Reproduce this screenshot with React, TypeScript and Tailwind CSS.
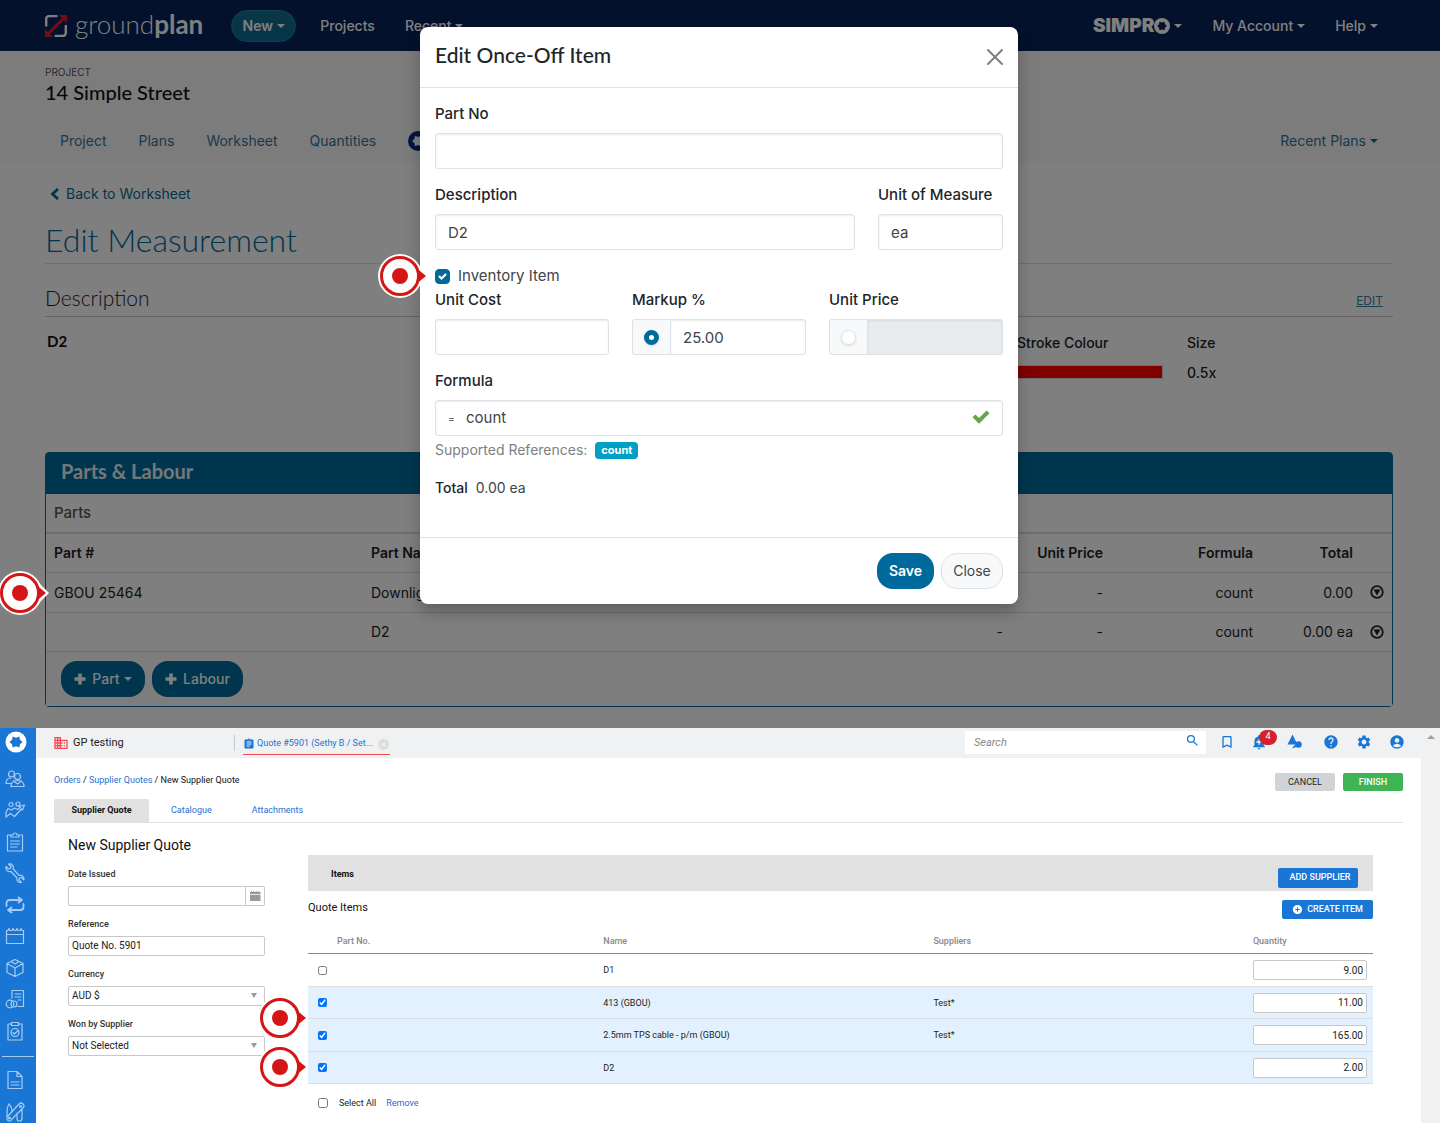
import { ReactNode, useState } from "react";
import {
    MdAccountCircle,
    MdAddAlert,
    MdAddCircle,
    MdAssignment,
    MdBookmarkBorder,
    MdBusiness,
    MdCancel,
    MdHelp,
    MdSearch,
    MdSettings,
} from "react-icons/md";

const parts = [
    { no: "GBOU 25464", name: "Downlight", cost: "-", price: "-", formula: "count", total: "0.00" },
    { no: "", name: "D2", cost: "-", price: "-", formula: "count", total: "0.00 ea" },
];

const quoteItems = [
    { name: "D1", supplier: "", quantity: "9.00", checked: false },
    { name: "413 (GBOU)", supplier: "Test*", quantity: "11.00", checked: true },
    { name: "2.5mm TPS cable - p/m (GBOU)", supplier: "Test*", quantity: "165.00", checked: true },
    { name: "D2", supplier: "", quantity: "2.00", checked: true },
];

const inputClass =
    "h-9 w-full rounded-[3px] border border-[#dee2e6] bg-white px-3 text-[15px] text-[#3f4448] shadow-[inset_0_1px_2px_rgba(0,0,0,0.08)] outline-none";
const labelClass = "mb-2 block text-[15px] leading-[22px] font-medium text-[#212529]";
const radioClass =
    "size-[15px] appearance-none rounded-full border border-[#e2e4e6] bg-white shadow-[0_1px_3px_rgba(0,0,0,0.12)] checked:border-[5px] checked:border-[#006a9c]";
const smallInputClass = "block h-5 w-full rounded-[2px] border border-[#c8c8c8] bg-white px-[3px] text-[10px] text-[#222] outline-none";

function Caret({ className = "" }: { className?: string }) {
    return (
        <svg viewBox="0 0 8 4" className={`h-1 w-2 ${className}`} fill="currentColor" aria-hidden="true">
            <path d="M0 0h8L4 4z" />
        </svg>
    );
}

function Plus() {
    return (
        <svg viewBox="0 0 12 12" className="size-3" fill="currentColor" aria-hidden="true">
            <path d="M4.200.5h3.600v3.700h3.700v3.600H7.800v3.700H4.200V7.800H.5V4.200h3.700z" />
        </svg>
    );
}

function Check({ className }: { className: string }) {
    return (
        <svg viewBox="0 0 18 16" className={className} fill="currentColor" aria-hidden="true">
            <path d="M.5 8.300 3.400 5.400 7 8.900 14.600 1.400 17.500 4.300 7 14.800z" />
        </svg>
    );
}

function Pin({ className }: { className: string }) {
    return (
        <svg viewBox="0 0 52 44" className={`pointer-events-none absolute z-20 h-11 w-[52px] ${className}`} aria-hidden="true">
            <circle cx="22" cy="22" r="22" fill="#fff" />
            <path d="M38 9 L51 22 L38 35z" fill="#fff" />
            <path d="M39 14.5 L48 22 L39 29.5z" fill="#d41616" />
            <circle cx="22" cy="22" r="18.5" fill="#fff" stroke="#d41616" strokeWidth="3" />
            <circle cx="22" cy="22" r="8" fill="#d41616" />
        </svg>
    );
}

function SideIcon({ label, children }: { label: string; children: ReactNode }) {
    return (
        <a href="#" aria-label={label} className="block">
            <svg viewBox="0 0 20 20" className="size-5" fill="none" stroke="#a9cbf0" strokeWidth="1.2" strokeLinejoin="round" strokeLinecap="round">
                {children}
            </svg>
        </a>
    );
}

function NavBar() {
    return (
        <nav className="flex h-[51px] items-center bg-[#062258] pr-[62px] pl-[45px] text-[14px] font-medium text-white">
            <a href="#" className="flex items-center gap-2">
                <svg viewBox="0 0 22 22" className="size-[22px]" fill="none" aria-hidden="true">
                    <path d="M1.200 11.500V4a3 3 0 0 1 3-3H12.500M20.800 10V18a3 3 0 0 1-3 3H9.500" stroke="#fff" strokeWidth="2.400" />
                    <path d="M3 19 19 3" stroke="#e01f26" strokeWidth="2.800" />
                    <path d="M14 0h8v8zM0 14v8h8z" fill="#e01f26" />
                </svg>
                <span className="pb-1 font-['Lato',sans-serif] text-[26px] leading-8 font-light">
                    ground<span className="font-bold">plan</span>
                </span>
            </a>
            <button type="button" className="ml-7 flex h-8 w-[65px] items-center justify-center gap-1 rounded-full border border-[#0c86a8] bg-gradient-to-b from-[#146f8c] to-[#0d6a92] font-semibold">
                New <Caret />
            </button>
            <a href="#" className="ml-6">Projects</a>
            <a href="#" className="ml-[30px] flex items-center gap-1">
                Recent <Caret />
            </a>
            <button type="button" className="ml-auto flex items-center gap-1">
                <span className="flex items-center text-[19px] leading-6 font-black">
                    SIMPR
                    <svg viewBox="0 0 16 16" className="size-4" aria-label="O">
                        <circle cx="8" cy="8" r="8" fill="#fff" />
                        <path d="M12.800 8 11.100 9.800 10.400 12.200 8 11.600 5.600 12.200 4.900 9.800 3.200 8 4.900 6.200 5.600 3.800 8 4.400 10.400 3.800 11.100 6.200z" fill="#062258" />
                    </svg>
                </span>
                <Caret />
            </button>
            <button type="button" className="ml-[30px] flex items-center gap-1">
                My Account <Caret />
            </button>
            <button type="button" className="ml-[30px] flex items-center gap-1">
                Help <Caret />
            </button>
        </nav>
    );
}

function ProjectHeader() {
    return (
        <header className="h-[111px] bg-[#f9f9f9] pt-3.5 pr-[62px] pl-[45px]">
            <p className="text-[10px] leading-[14px] text-[#555]">PROJECT</p>
            <h2 className="font-['Lato',sans-serif] text-[20px] leading-[26px] font-medium text-[#111]">14 Simple Street</h2>
            <div className="mt-[25px] flex items-center gap-8 pl-[15px] text-[14px] leading-[22px] text-[#337299]">
                <a href="#">Project</a>
                <a href="#">Plans</a>
                <a href="#">Worksheet</a>
                <a href="#">Quantities</a>
                <a href="#" aria-label="Simpro">
                    <svg viewBox="0 0 20 20" className="size-5">
                        <circle cx="10" cy="10" r="10" fill="#052a78" />
                        <path d="M16 10 13.600 12 13 15.200 10 14 7 15.200 6.400 12 4 10 6.400 8 7 4.800 10 6 13 4.800 13.600 8z" fill="#fff" />
                    </svg>
                </a>
                <button type="button" className="ml-auto flex items-center gap-1">
                    Recent Plans <Caret className="text-[#006a9c]" />
                </button>
            </div>
        </header>
    );
}

function Measurement() {
    return (
        <main className="pt-[21px] pr-[47px] pb-[21px] pl-[45px] text-[14px]">
            <a href="#" className="flex items-center gap-1.5 pl-[5px] leading-[22px] text-[#0b6795]">
                <svg viewBox="0 0 10 12" className="h-3 w-2.5" fill="none" stroke="#006a9c" strokeWidth="2.800" aria-hidden="true">
                    <path d="M8 1 2.500 6 8 11" />
                </svg>
                Back to Worksheet
            </a>
            <h1 className="mt-3 border-b border-[#dcdfe1] pt-0.5 pb-0.5 font-['Lato',sans-serif] text-[32px] leading-[42px] font-light text-[#006a9c]">
                Edit Measurement
            </h1>
            <div className="mt-5 flex items-center justify-between border-b border-[#ccc] pr-2.5 pb-1 text-[#222]">
                <h3 className="font-['Lato',sans-serif] text-[21px] leading-7 font-light">Description</h3>
                <a href="#" className="pt-1.5 text-[12px] text-[#3a7da2] underline">EDIT</a>
            </div>
            <div className="mt-3 flex h-[123px] leading-6">
                <p className="ml-0.5 font-['Lato',sans-serif] text-[15px] font-bold text-[#111]">D2</p>
                <dl className="mt-0.5 ml-auto grid grid-cols-[146px_206px] grid-rows-[24px_36px] gap-x-6 font-medium text-[#222]">
                    <dt>Stroke Colour</dt>
                    <dt>Size</dt>
                    <dd className="mt-2.5 h-3.5 border border-[#ddd] bg-[#ff0000]" />
                    <dd className="pt-1.5">0.5x</dd>
                </dl>
            </div>

            <section className="rounded border border-[#006a9c] text-[#222]">
                <h2 className="h-[41px] bg-[#006a9c] px-[15px] font-['Lato',sans-serif] text-[20px] leading-[37px] font-bold text-white/90">
                    Parts &amp; Labour
                </h2>
                <h3 className="border-b-2 border-[#ddd] px-2 text-[15px] leading-[38px] font-medium text-[#555]">Parts</h3>
                <table className="w-full table-fixed text-right">
                    <colgroup>
                        <col className="w-[317px]" />
                        <col />
                        <col className="w-40" />
                        <col className="w-[100px]" />
                        <col className="w-[150px]" />
                        <col className="w-[100px]" />
                        <col className="w-[31px]" />
                    </colgroup>
                    <thead>
                        <tr className="h-[38px] border-b border-[#d8dadc] [&>th]:px-2 [&>th]:font-semibold">
                            <th className="text-left">Part #</th>
                            <th className="text-left">Part Name</th>
                            <th>Unit Cost</th>
                            <th>Unit Price</th>
                            <th>Formula</th>
                            <th>Total</th>
                            <th />
                        </tr>
                    </thead>
                    <tbody>
                        {parts.map((part) => (
                            <tr key={part.name} className="border-b border-[#d8dadc] odd:h-10 even:h-[39px] [&>td]:px-2">
                                <td className="relative text-left">
                                    {part.no && <Pin className="-top-0.5 -left-12" />}
                                    {part.no}
                                </td>
                                <td className="text-left">{part.name}</td>
                                <td>{part.cost}</td>
                                <td>{part.price}</td>
                                <td>{part.formula}</td>
                                <td>{part.total}</td>
                                <td className="!px-0">
                                    <button type="button" aria-label="Row actions" className="mx-auto block">
                                        <svg viewBox="0 0 14 14" className="size-[14px]">
                                            <circle cx="7" cy="7" r="5.800" fill="none" stroke="#222" strokeWidth="1.800" />
                                            <path d="M3.500 4.600h7L7 10.500z" fill="#222" />
                                        </svg>
                                    </button>
                                </td>
                            </tr>
                        ))}
                    </tbody>
                </table>
                <div className="flex gap-[7px] bg-[#fafafa] px-[15px] py-[9px] font-medium text-white">
                    <button type="button" className="flex h-9 w-[84px] items-center justify-center gap-1.5 rounded-2xl bg-[#006a9c]">
                        <Plus />
                        Part <Caret className="-ml-0.5" />
                    </button>
                    <button type="button" className="flex h-9 w-[91px] items-center justify-center gap-1.5 rounded-2xl bg-[#006a9c]">
                        <Plus />
                        Labour
                    </button>
                </div>
            </section>
        </main>
    );
}

function EditItemDialog() {
    const [mode, setMode] = useState("markup");

    return (
        <div className="absolute inset-0 z-10 flex items-start justify-center bg-black/50 pt-[27px] pr-0.5">
            <div role="dialog" aria-labelledby="dialog-title" className="w-[598px] rounded-lg bg-white text-[15px] text-[#3f4448] shadow-[0_8px_16px_rgba(0,0,0,0.25)]">
                <div className="flex h-[61px] items-center justify-between border-b border-[#dee2e6] px-[15px]">
                    <h2 id="dialog-title" className="pb-1 font-['Lato',sans-serif] text-[21px] leading-7 font-medium text-[#212529]">
                        Edit Once-Off Item
                    </h2>
                    <button type="button" aria-label="Close dialog">
                        <svg viewBox="0 0 16 16" className="size-4" stroke="#7c7c7c" strokeWidth="1.800" strokeLinecap="round">
                            <path d="M1 1l14 14M15 1L1 15" />
                        </svg>
                    </button>
                </div>
                <form className="px-[15px] pt-[15px] pb-[38px]">
                    <label htmlFor="part-no" className={labelClass}>Part No</label>
                    <input id="part-no" className={inputClass} />
                    <div className="mt-[15px] grid grid-cols-[1fr_125px] gap-[23px]">
                        <div>
                            <label htmlFor="description" className={labelClass}>Description</label>
                            <input id="description" defaultValue="D2" className={inputClass} />
                        </div>
                        <div>
                            <label htmlFor="uom" className={`${labelClass} whitespace-nowrap`}>Unit of Measure</label>
                            <input id="uom" defaultValue="ea" className={inputClass} />
                        </div>
                    </div>
                    <div className="relative mt-[15px] flex h-[22px] items-center gap-2">
                        <Pin className="-top-[11px] -left-[57px]" />
                        <span className="grid place-items-center">
                            <input
                                id="inventory"
                                type="checkbox"
                                defaultChecked
                                className="peer col-start-1 row-start-1 size-[15px] appearance-none rounded-[4px] border border-[#006a9c] checked:bg-[#006a9c]"
                            />
                            <Check className="pointer-events-none col-start-1 row-start-1 hidden size-[9px] text-white peer-checked:block" />
                        </span>
                        <label htmlFor="inventory">Inventory Item</label>
                    </div>
                    <div className="mt-0.5 grid grid-cols-3 gap-[23px]">
                        <div>
                            <label htmlFor="unit-cost" className={labelClass}>Unit Cost</label>
                            <input id="unit-cost" className={inputClass} />
                        </div>
                        <div>
                            <label htmlFor="markup" className={labelClass}>Markup %</label>
                            <div className="flex">
                                <span className="flex w-[38px] shrink-0 items-center justify-center rounded-l-[3px] border border-r-0 border-[#dee2e6] bg-[#f8f9fa]">
                                    <input
                                        type="radio"
                                        name="mode"
                                        aria-label="Use markup"
                                        checked={mode === "markup"}
                                        onChange={() => setMode("markup")}
                                        className={radioClass}
                                    />
                                </span>
                                <input id="markup" defaultValue="25.00" disabled={mode !== "markup"} className={`${inputClass} rounded-l-none disabled:bg-[#e9ecef]`} />
                            </div>
                        </div>
                        <div>
                            <label htmlFor="unit-price" className={labelClass}>Unit Price</label>
                            <div className="flex">
                                <span className="flex w-[38px] shrink-0 items-center justify-center rounded-l-[3px] border border-r-0 border-[#dee2e6] bg-[#f8f9fa]">
                                    <input
                                        type="radio"
                                        name="mode"
                                        aria-label="Use unit price"
                                        checked={mode === "price"}
                                        onChange={() => setMode("price")}
                                        className={radioClass}
                                    />
                                </span>
                                <input id="unit-price" disabled={mode !== "price"} className={`${inputClass} rounded-l-none disabled:bg-[#e9ecef]`} />
                            </div>
                        </div>
                    </div>
                    <label htmlFor="formula" className={`${labelClass} mt-[15px]`}>Formula</label>
                    <div className={`${inputClass} flex items-center`}>
                        <span className="w-[18px] text-[10px]">=</span>
                        <input id="formula" defaultValue="count" className="min-w-0 flex-1 outline-none" />
                        <Check className="mb-0.5 h-4 w-[18px] text-[#67a546]" />
                    </div>
                    <p className="mt-[3px] flex items-center gap-2 text-[14px] leading-[22px] text-[#7b7f83]">
                        Supported References:
                        <span className="rounded bg-[#009fc5] px-1.5 text-[11px] leading-[17px] font-bold text-white">count</span>
                    </p>
                    <p className="mt-4 text-[14px] leading-[22px]">
                        <span className="mr-2 font-medium text-[#212529]">Total</span>0.00 ea
                    </p>
                </form>
                <div className="flex justify-end gap-[7px] border-t border-[#dee2e6] p-[15px] text-[14px]">
                    <button type="button" className="h-9 w-[57px] rounded-2xl bg-[#006a9c] pb-0.5 font-semibold text-white">Save</button>
                    <button type="button" className="h-9 w-[62px] rounded-2xl border border-[#dee2e6] bg-[#f8f9fa] pb-0.5">Close</button>
                </div>
            </div>
        </div>
    );
}

function Sidebar() {
    return (
        <aside className="w-9 shrink-0 bg-[#1976d5] pt-[3px] pb-px">
            <a href="#" aria-label="Home" className="ml-[5px] block">
                <svg viewBox="0 0 22 22" className="size-[22px]">
                    <circle cx="11" cy="11" r="10.500" fill="#fff" />
                    <path d="M17.500 11 15 13.300 14.300 16.600 11 15.300 7.700 16.600 7 13.300 4.500 11 7 8.700 7.700 5.400 11 6.700 14.300 5.400 15 8.700z" fill="#1976d5" />
                </svg>
            </a>
            <div className="mt-4 ml-[5px] flex h-[272px] flex-col justify-between">
                <SideIcon label="People">
                    <circle cx="6.500" cy="5" r="3" />
                    <circle cx="12.500" cy="7.500" r="3" fill="#1976d5" />
                    <path d="M1 14.500c0-3.500 2-5.500 5-5.500M1 14.500h5M6 17.500c0-4 2.500-6 6.500-6s6.500 2 6.500 6zM8.500 12l4 3 4-3" />
                </SideIcon>
                <SideIcon label="Leads">
                    <circle cx="6" cy="4.500" r="2" />
                    <circle cx="13" cy="4" r="2" />
                    <path d="M1 17v-4.500l2-4 3.500 1.500 3-2 3 1.500 3-2L14 6.500 19.500 5l-2 5-1-1L9.500 16.500 5.500 13.500z" />
                </SideIcon>
                <SideIcon label="Quotes">
                    <path d="M6 3H2.500v16h15V3H14M6 5V3h2a2 2 0 0 1 4 0h2v2zM5.500 9h9M5.500 12h9M5.500 15H12" />
                </SideIcon>
                <SideIcon label="Jobs">
                    <path d="M1 3.500 3.500 6l2-.5.500-2L3.500 1C7 .3 9 3 8.200 6l6 6.500c3-.8 5.300 1.500 4.600 4.500L16.500 14.500l-2 .5-.5 2 2.500 2.500c-3 .5-5-1.500-4.500-4.500L6 8.500C3 9.300.300 7 1 3.500z" />
                </SideIcon>
                <SideIcon label="Recurring">
                    <path d="M1.500 11V8a3 3 0 0 1 3-3H15M13.500 2.500l3.500 2.500-3.500 2.500M18.500 9v3a3 3 0 0 1-3 3H5M6.500 12.500 3 15l3.500 2.500" strokeWidth="1.800" />
                </SideIcon>
                <SideIcon label="Schedules">
                    <path d="M1.500 4.500h1.500l1-2 1 2h2l1-2 1 2h2l1-2 1 2h2l1-2 1 2h1.500V17.500h-17zM1.500 8.500h17" />
                </SideIcon>
                <SideIcon label="Materials">
                    <path d="M10 1.500l8 4v9L10 18.500l-8-4v-9zM2 5.500l8 4.500 8-4.500M10 10v8.500M6 3.500l4 2.500 4-2.500" />
                </SideIcon>
                <SideIcon label="Invoices">
                    <path d="M7 9V1.500h11.500v16H13M10 5h6M10 8h6M13 11h3" />
                    <circle cx="5" cy="15" r="3.800" />
                    <circle cx="9" cy="15" r="3" />
                </SideIcon>
                <SideIcon label="Tasks">
                    <path d="M6.500 3H3v16h14V3h-3.500M6.500 4.500v-3h7v3zM8 11.500l1.500 1.500 3-3" />
                    <circle cx="10" cy="11.500" r="4" />
                </SideIcon>
            </div>
            <hr className="mx-0.5 mt-[15px] border-[#a9cbf0]" />
            <div className="mt-[13px] ml-[5px] flex flex-col gap-3">
                <SideIcon label="Reports">
                    <path d="M3 1.500h9l5 5v12H3zM12 1.500v5h5M6 12h8M6 15h8" />
                </SideIcon>
                <SideIcon label="Utilities">
                    <path d="M4 2c-2 3-2 6-2 9v5a2.500 2.500 0 0 0 5 1L18 6a2.800 2.800 0 0 0-4-4L3 14M4 2c2 2 3 4 3 7M12 11v5.500a2.500 2.500 0 0 0 5 0V7" />
                    <circle cx="15.500" cy="4.500" r="1" />
                    <circle cx="4.500" cy="16" r="1" />
                </SideIcon>
            </div>
        </aside>
    );
}

function TopBar() {
    return (
        <div className="flex h-[30px] items-center bg-[#eff1f3] pl-[17px] text-[#1976d5]">
            <MdBusiness className="size-4 text-[#fb4a4f]" />
            <span className="ml-1 w-[161px] pt-0.5 text-[11px] text-[#222]">GP testing</span>
            <div className="flex h-4 items-center border-l border-[#c5c9cc] pl-2">
                <a href="#" className="flex h-6 items-center gap-0.5 border-b border-[#fb4a4f] pt-1 text-[9px] whitespace-nowrap">
                    <MdAssignment className="size-3" />
                    Quote #5901 (Sethy B / Set...
                    <MdCancel className="ml-0.5 size-[13px] text-[#dcdcdc]" />
                </a>
            </div>
            <label className="ml-auto flex h-[23px] w-[241px] items-center bg-white pr-1.5 pl-[9px]">
                <input type="search" placeholder="Search" aria-label="Search" className="min-w-0 flex-1 pt-px text-[11px] italic outline-none placeholder:text-[#888]" />
                <MdSearch className="mb-1 size-[15px]" />
            </label>
            <div className="flex w-[215px] shrink-0 items-center pb-0.5 pl-[13px]">
                <a href="#" aria-label="Bookmarks"><MdBookmarkBorder className="size-4" /></a>
                <a href="#" aria-label="Notifications" className="relative ml-4">
                    <MdAddAlert className="size-4" />
                    <span className="absolute -top-1 left-2 flex h-[15px] w-[18px] items-center justify-center rounded-full bg-[#d3222a] text-[9px] text-white">4</span>
                </a>
                <a href="#" aria-label="Announcements" className="ml-5">
                    <svg viewBox="0 0 15 15" className="size-[15px]" fill="currentColor">
                        <path d="M5.500.5 10.500 10.500H.5zM5 14.500l3-4 1.500 2.500z" />
                        <circle cx="11.500" cy="10.500" r="3.200" />
                    </svg>
                </a>
                <a href="#" aria-label="Help" className="ml-[21px]"><MdHelp className="size-4" /></a>
                <a href="#" aria-label="Settings" className="ml-[17px]"><MdSettings className="size-4" /></a>
                <a href="#" aria-label="Account" className="ml-[17px]"><MdAccountCircle className="size-4" /></a>
            </div>
        </div>
    );
}

function SmallField({ id, label, children }: { id: string; label: string; children: ReactNode }) {
    return (
        <div className="mb-[11px]">
            <label htmlFor={id} className="mb-[5px] block text-[9px] leading-[14px] font-medium text-[#333]">{label}</label>
            {children}
        </div>
    );
}

function SmallSelect({ id, value }: { id: string; value: string }) {
    return (
        <div className="relative">
            <select id={id} className={`${smallInputClass} appearance-none`}>
                <option>{value}</option>
            </select>
            <svg viewBox="0 0 6 5" className="pointer-events-none absolute top-[7px] right-2 h-[5px] w-1.5" fill="#999" aria-hidden="true">
                <path d="M0 0h6L3 5z" />
            </svg>
        </div>
    );
}

function QuoteForm() {
    return (
        <form className="w-[197px] shrink-0 pt-3">
            <h2 className="mb-3 text-[14px] leading-5 text-[#111]">New Supplier Quote</h2>
            <SmallField id="date-issued" label="Date Issued">
                <div className="flex">
                    <input id="date-issued" className={`${smallInputClass} rounded-r-none`} />
                    <button type="button" aria-label="Pick a date" className="flex h-5 w-[19px] shrink-0 items-center justify-center rounded-r-[2px] border border-l-0 border-[#c8c8c8]">
                        <svg viewBox="0 0 12 10" className="h-2.5 w-3" fill="#999">
                            <path d="M1 4h10.500v6H1zM1 1h1V0h1v1h1.300V0h1v1h1.500V0h1v1h1.400V0h1v1h1.300v2.300H1z" />
                        </svg>
                    </button>
                </div>
            </SmallField>
            <SmallField id="reference" label="Reference">
                <input id="reference" defaultValue="Quote No. 5901" className={smallInputClass} />
            </SmallField>
            <SmallField id="currency" label="Currency">
                <SmallSelect id="currency" value="AUD $" />
            </SmallField>
            <SmallField id="won-by" label="Won by Supplier">
                <SmallSelect id="won-by" value="Not Selected" />
            </SmallField>
        </form>
    );
}

function QuoteItems() {
    return (
        <section className="min-w-0 flex-1 pt-8">
            <div className="flex h-9 justify-between bg-[#e1e1e1] pr-[15px] pl-[23px]">
                <h3 className="pt-3 text-[9px] leading-[14px] font-bold text-[#111]">Items</h3>
                <button type="button" className="mt-[13px] h-5 w-20 rounded-[2px] bg-[#1976d5] pt-px pl-1 text-[9px] font-medium text-white">ADD SUPPLIER</button>
            </div>
            <div className="mt-[9px] flex justify-between">
                <h3 className="text-[11px] leading-4 text-[#111]">Quote Items</h3>
                <button type="button" className="flex h-[19px] w-[91px] items-center justify-center gap-1 rounded-[2px] bg-[#1976d5] text-[9px] font-medium text-white">
                    <MdAddCircle className="size-[11px]" />
                    <span className="pt-0.5">CREATE ITEM</span>
                </button>
            </div>
            <table className="mt-2.5 w-full table-fixed text-left text-[9px] text-[#222]">
                <colgroup>
                    <col className="w-[29px]" />
                    <col className="w-1/4" />
                    <col className="w-[31%]" />
                    <col className="w-[30%]" />
                    <col />
                </colgroup>
                <thead>
                    <tr className="h-[25px] border-b border-[#8a8a8a] text-[#888] [&>th]:pt-px [&>th]:font-medium">
                        <th />
                        <th>Part No.</th>
                        <th>Name</th>
                        <th>Suppliers</th>
                        <th>Quantity</th>
                    </tr>
                </thead>
                <tbody>
                    {quoteItems.map((item, i) => (
                        <tr key={item.name} className={`border-b border-[#dcdfe2] odd:h-[33px] even:h-8 ${item.checked ? "bg-[#e3f1fe]" : ""}`}>
                            <td className="relative pl-2.5">
                                {i === 1 && <Pin className="top-[9px] -left-[50px]" />}
                                {i === 3 && <Pin className="-top-[7px] -left-[50px]" />}
                                <input type="checkbox" aria-label={`Select ${item.name}`} defaultChecked={item.checked} className="block size-[9px] accent-[#0075ff]" />
                            </td>
                            <td />
                            <td className="pt-0.5">{item.name}</td>
                            <td className="pt-0.5">{item.supplier}</td>
                            <td className="pr-1.5">
                                <input aria-label={`Quantity of ${item.name}`} defaultValue={item.quantity} className={`${smallInputClass} text-right`} />
                            </td>
                        </tr>
                    ))}
                </tbody>
            </table>
            <div className="mt-3 flex items-center pl-2.5 text-[9px] leading-[14px] text-[#222]">
                <input id="select-all" type="checkbox" className="size-2.5" />
                <label htmlFor="select-all" className="ml-[11px]">Select All</label>
                <a href="#" className="ml-2.5 text-[#1f6fd0]">Remove</a>
            </div>
        </section>
    );
}

function SupplierQuotePage() {
    return (
        <div className="flex bg-white font-['Roboto',sans-serif]">
            <Sidebar />
            <div className="flex min-w-0 flex-1 flex-col">
                <TopBar />
                <div className="flex-1 pr-[18px] pl-[18px]">
                    <div className="flex h-[41px] items-start justify-between pt-[15px] text-[9px]">
                        <nav aria-label="Breadcrumb" className="leading-[14px] text-[#111]">
                            <a href="#" className="text-[#1f6fd0]">Orders</a> / <a href="#" className="text-[#1f6fd0]">Supplier Quotes</a> / New Supplier Quote
                        </nav>
                        <div className="flex gap-2">
                            <button type="button" className="h-[18px] w-[60px] rounded-[2px] bg-[#d0d4d7] pt-0.5 text-[#222]">CANCEL</button>
                            <button type="button" className="h-[18px] w-[60px] rounded-[2px] bg-[#3fb455] pt-0.5 font-medium text-white">FINISH</button>
                        </div>
                    </div>
                    <div className="flex h-6 items-stretch border-b border-[#e1e1e1] text-[9px]">
                        <button type="button" className="w-[95px] rounded-t-[2px] bg-[#e1e1e1] pt-px font-bold text-[#111]">Supplier Quote</button>
                        <button type="button" className="ml-[22px] pt-px text-[#1f6fd0]">Catalogue</button>
                        <button type="button" className="ml-10 pt-px text-[#1f6fd0]">Attachments</button>
                    </div>
                    <div className="flex gap-[43px] pr-[30px] pl-[14px]">
                        <QuoteForm />
                        <QuoteItems />
                    </div>
                </div>
            </div>
            {/* scroll track */}
            <div className="w-[19px] shrink-0 bg-[#f1f1f1] pt-[7px]">
                <Caret className="mx-auto rotate-180 text-[#a0a0a0]" />
            </div>
        </div>
    );
}

export default function App() {
    return (
        <div className="min-w-[1200px]">
            <div className="relative bg-white font-['Inter',sans-serif]">
                <NavBar />
                <ProjectHeader />
                <Measurement />
                <EditItemDialog />
            </div>
            <SupplierQuotePage />
        </div>
    );
}
